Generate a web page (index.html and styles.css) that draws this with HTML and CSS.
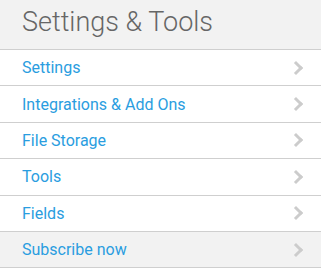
FILE: index.html
```html
<!DOCTYPE html>
<html lang="en">
<head>
    <meta charset="UTF-8">
    <meta name="viewport" content="width=device-width, initial-scale=1.0">
    <title>Settings &amp; Tools</title>
    <link rel="stylesheet" href="styles.css">
</head>
<body>
    <div class="panel">
        <h1>Settings &amp; Tools</h1>
        <ul class="menu">
            <li><a href="#">Settings <span class="chev"></span></a></li>
            <li><a href="#">Integrations &amp; Add Ons <span class="chev"></span></a></li>
            <li><a href="#">File Storage <span class="chev"></span></a></li>
            <li><a href="#">Tools <span class="chev"></span></a></li>
            <li><a href="#">Fields <span class="chev"></span></a></li>
            <li class="subscribe"><a href="#">Subscribe now <span class="chev"></span></a></li>
        </ul>
    </div>
</body>
</html>
```

FILE: styles.css
```css
body {
    font-family: 'Roboto', sans-serif;
    margin: 0;
    padding: 0;
    background: #fff;
}

.panel {
    width: 100%;
}

h1 {
    margin: 0;
    height: 50px;
    padding-left: 22px;
    background: #f2f2f2;
    border-bottom: 1px solid #cfcfcf;
    font-size: 27px;
    font-weight: 300;
    line-height: 45px;
    color: #666;
    box-sizing: border-box;
}

.menu {
    list-style: none;
    margin: 0;
    padding: 0;
}

.menu li {
    border-bottom: 1px solid #cfcfcf;
}

.menu a {
    display: flex;
    align-items: center;
    justify-content: space-between;
    height: 35.4px;
    padding: 0 18px 0 22px;
    font-size: 16px;
    color: #2a9de0;
    text-decoration: none;
}

.subscribe {
    background: #f2f2f2;
}

.chev {
    width: 7px;
    height: 7px;
    border-top: 3px solid #cccccc;
    border-right: 3px solid #cccccc;
    transform: rotate(45deg);
    margin-right: 2px;
}
```
